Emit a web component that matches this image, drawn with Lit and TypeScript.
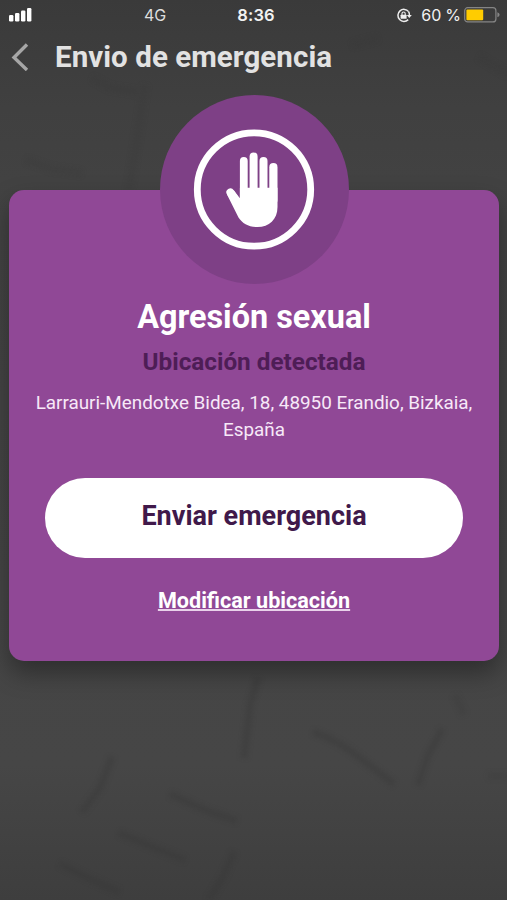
import { LitElement, html, css, svg } from "lit";
import { customElement, property } from "lit/decorators.js";

@customElement("status-bar")
class StatusBar extends LitElement {
  @property() network = "4G";
  @property() time = "8:36";
  @property({ type: Number }) battery = 60;

  static styles = css`
    :host { display: grid; grid-template-columns: 1fr auto 1fr; align-items: center; height: 30px; padding: 0 8px 0 9px; box-sizing: border-box; color: #f2f2f2; font: 500 16.5px/30px Inter, sans-serif; }
    .left, .right { display: flex; align-items: center; }
    .left { gap: 111px; }
    .network { font-size: 16px; font-weight: 400; color: #dedede; letter-spacing: -0.2px; }
    .time { font-weight: 600; letter-spacing: 0.1px; padding-left: 4px; }
    .right { justify-content: flex-end; font-weight: 400; font-size: 16px; margin-right: -1px; }
    .percent { margin: 0 3px 0 9px; white-space: nowrap; letter-spacing: 0.1px; word-spacing: -0.8px; }
    svg { display: block; }
  `;

  render() {
    const bars = [[0, 7], [6, 5], [12, 2.5], [18, 0]];
    return html`
      <div class="left">
        <svg width="24" height="14" viewBox="0 0 24 14" fill="#fff">
          ${bars.map(([x, y]) => svg`<rect x=${x} y=${y} width="4.4" height=${13.5 - y} rx="1.2"></rect>`)}
        </svg>
        <span class="network">${this.network}</span>
      </div>
      <span class="time">${this.time}</span>
      <div class="right">
        <svg width="16" height="15" viewBox="0 0 16 15" fill="none" stroke="#ededed" stroke-width="1.5">
          <path d="M12.6 3.6A6 6 0 1 0 12.2 11.6"></path>
          <path d="M12.6 3.6A6 6 0 0 1 13.4 7.5"></path>
          <path d="M10.8 7h5L13.3 10z" fill="#ededed" stroke="none"></path>
          <rect x="4.6" y="6.7" width="6" height="4.1" rx=".6" fill="#ededed" stroke="none"></rect>
          <path d="M6 7V5.6a1.6 1.6 0 0 1 3.2 0V7" stroke-width="1.1"></path>
        </svg>
        <span class="percent">${this.battery} %</span>
        <svg width="36" height="16" viewBox="0 0 36 16">
          <rect x=".7" y=".7" width="31.2" height="14.2" rx="3" fill="none" stroke="#858585" stroke-width="1.2"></rect>
          <rect x="2.4" y="2.4" width=${this.battery * 0.28} height="10.8" rx="1" fill="#fc0"></rect>
          <path d="M33.4 5.3q2.2 .8 2.2 2.5t-2.2 2.5z" fill="#858585"></path>
        </svg>
      </div>
    `;
  }
}

@customElement("hand-badge")
class HandBadge extends LitElement {
  static styles = css`
    :host { display: block; width: 189px; height: 189px; border-radius: 50%; background: #7e4086; }
    svg { display: block; }
  `;

  render() {
    return html`
      <svg width="189" height="189" viewBox="0 0 189 189">
        <circle cx="94" cy="94.5" r="56.7" fill="none" stroke="#fff" stroke-width="6.8"></circle>
        <g stroke="#fff" stroke-linecap="round" fill="none">
          <path d="M83.800 65.900V105" stroke-width="7.800"></path>
          <path d="M93.600 61.600V105" stroke-width="8"></path>
          <path d="M103.500 66V105" stroke-width="8"></path>
          <path d="M113.400 72.200V105" stroke-width="8.200"></path>
          <path d="M70.400 97.400L80 112" stroke-width="8"></path>
        </g>
        <path d="M79.900 92.700H117.500V112C117.500 124.500 109 132 97.500 132C88.500 132 82.500 128.500 78.500 122.500L67 99.600L73.800 95.300L79.900 103.300Z" fill="#fff"></path>
      </svg>
    `;
  }
}

@customElement("app-root")
class AppRoot extends LitElement {
  static styles = css`
    :host { display: block; font-family: Roboto, sans-serif; }
    .screen { position: relative; display: flex; flex-direction: column; box-sizing: border-box; height: 900px; overflow: hidden; background: linear-gradient(#3a3a3a, #404040 12%, #434343 24%, #464646 85%, #3e3e3e); }
    .map { position: absolute; inset: 0; filter: blur(2px); }
    status-bar, header, .card { position: relative; }
    header { display: flex; align-items: center; height: 54px; padding-left: 11px; gap: 26px; }
    h1, h2, h3, p { margin: 0; }
    h1 { font-size: 29.5px; line-height: 54px; font-weight: 700; color: #e2e2e2; letter-spacing: 0.06px; }
    .card { display: flex; flex-direction: column; align-items: center; box-sizing: border-box; width: 490px; height: 471px; margin: 106px 0 0 9px; border-radius: 15px; background: #904896; box-shadow: 0 12px 24px rgba(0, 0, 0, .34); text-align: center; color: #fff; }
    hand-badge { flex: none; margin-top: -95px; }
    h2 { margin-top: 13px; font-size: 32.4px; line-height: 40px; font-weight: 700; }
    h3 { margin-top: 9px; font-size: 24.3px; line-height: 32px; font-weight: 700; color: #4e1d56; }
    .address { width: 450px; margin-top: 11px; font-size: 18.87px; line-height: 27px; color: #f7e9f8; }
    .send { width: 418px; height: 80px; flex: none; margin-top: 35px; padding: 0 0 5px; border: 0; border-radius: 40px; background: #fff; color: #40194a; font: 700 27px/32px Roboto, sans-serif; }
    .modify { margin-top: 29px; font-size: 21.6px; line-height: 28px; font-weight: 700; color: #fff; text-decoration: underline; text-decoration-color: #e9d2ea; text-decoration-thickness: 2px; text-underline-offset: 1px; text-decoration-skip-ink: none; }
  `;

  render() {
    return html`
      <main class="screen">
        <svg class="map" width="507" height="900" fill="none" stroke="#353535" stroke-opacity=".3" stroke-width="7">
          <path d="M258 678L250 705L244 758M234 852L224 875L209 900"></path>
          <path d="M313 732Q338 740 360 758L394 784M442 729L427 758L418 785"></path>
          <path d="M112 757L100 788L82 812M170 794L205 810L237 821"></path>
          <path d="M119 833L150 846L185 860M60 864L88 878L119 892"></path>
          <path d="M145 85L137 139L129 190M92 78L110 88L137 92M26 160L52 169L82 173" stroke-opacity=".2"></path>
          <path d="M479 57L507 74M352 45L378 38M455 695L464 715M488 776H507" stroke-opacity=".2"></path>
        </svg>
        <status-bar></status-bar>
        <header>
          <svg width="18" height="28" viewBox="0 0 18 28" fill="none" stroke="#a6a6a6" stroke-width="3.4">
            <path d="M16 1.500L3 14.500L16 27"></path>
          </svg>
          <h1>Envio de emergencia</h1>
        </header>
        <section class="card">
          <hand-badge></hand-badge>
          <h2>Agresión sexual</h2>
          <h3>Ubicación detectada</h3>
          <p class="address">Larrauri-Mendotxe Bidea, 18, 48950 Erandio, Bizkaia, España</p>
          <button class="send">Enviar emergencia</button>
          <a class="modify">Modificar ubicación</a>
        </section>
      </main>
    `;
  }
}
